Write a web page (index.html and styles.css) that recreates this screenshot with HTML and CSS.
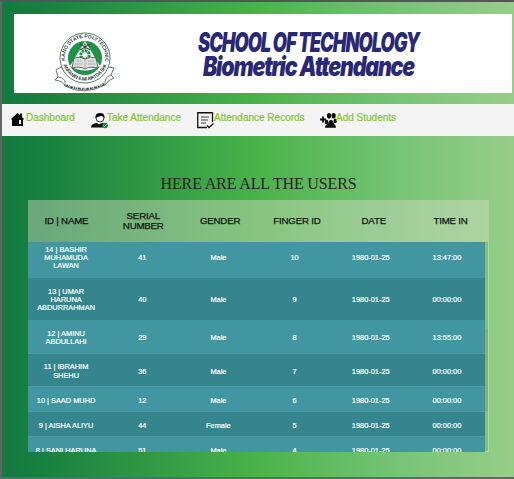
FILE: index.html
```html
<!DOCTYPE html>
<html lang="en">
<head>
<meta charset="utf-8">
<title>Biometric Attendance</title>
<link rel="stylesheet" href="styles.css">
</head>
<body>
<div class="page">
  <header class="banner">
    <svg class="crest" width="62" height="62" viewBox="0 0 62 62">
      <defs>
        <path id="arcTop" d="M12.200 34.500 A20.200 20.200 0 1 1 49.800 34.500"/>
        <path id="arcLow" d="M8.600 31 A22.800 22.800 0 0 0 53.400 31"/>
      </defs>
      <path d="M7 36 L2 39 L4 46 L1 49 Q9 50 11 55 Q30 65 51 54 Q54 49 60 47 L57 44 L60 37 L54 36 Q48 50 31 51 Q14 50 7 36Z" fill="#fff" stroke="#4e6c58" stroke-width=".9"/>
      <path d="M4 46 Q9 46 11 50 L11 55 M57 44 Q51 46 51 50 V54" fill="none" stroke="#4e6c58" stroke-width=".8"/>
      <circle cx="31" cy="27" r="25" fill="#fff" stroke="#4f8562" stroke-width="1"/>
      <circle cx="31" cy="27" r="17" fill="#1c9448"/>
      <path d="M31 10 L46 35 Q31 44 16 35Z" fill="#fff"/>
      <path d="M26 13 L36 19 M36 13 L26 19 M31 12 V19" stroke="#444" stroke-width="1.1"/>
      <circle cx="31" cy="24" r="4.2" fill="none" stroke="#1c9448" stroke-width="3" stroke-dasharray="2.4 .8"/>
      <path d="M20 27 Q26 25 31 28 Q37 25 42 27 L44 37 Q36 35 31 38 Q26 35 18 37Z" fill="#ddd" stroke="#444" stroke-width=".8"/>
      <path d="M31 28 V37 M22 30 H28 M34 30 H40 M21 33 H28 M34 33 H41" stroke="#999" stroke-width=".6"/>
      <text class="crest-text"><textPath href="#arcTop" startOffset="5" textLength="69">KANO STATE POLYTECHNIC</textPath></text>
      <text class="crest-text"><textPath href="#arcLow" startOffset="3" textLength="56">ANFANIN ILMI AIKI DA SHI</textPath></text>
      <path d="M12 54 Q31 62 50 53" fill="none" stroke="#444" stroke-width="2" stroke-dasharray="2 .7 1 .6 3 .8"/>
      <path d="M12 53.500 Q31 61 50 52.500" fill="none" stroke="#fff" stroke-width="1" stroke-dasharray="1 1.3"/>
    </svg>
    <svg class="title" width="236" height="64" viewBox="0 0 236 64">
      <text x="4" y="30" textLength="221" lengthAdjust="spacingAndGlyphs">SCHOOL OF TECHNOLOGY</text>
      <text x="9" y="54" textLength="211" lengthAdjust="spacingAndGlyphs">Biometric Attendance</text>
    </svg>
  </header>
  <nav class="menu">
    <a class="dash"><svg width="13" height="15" viewBox="0 0 13 15"><path d="M0 7 L6.5 1 L9 3 V1.5 H11 V5 L13 7 L12 8 V14 H1 V8Z" fill="#080808"/><path d="M8 8h2v4H8z" fill="#eee"/></svg><span>Dashboard</span></a>
    <a class="take"><svg width="17" height="17" viewBox="0 0 17 17"><path d="M0 15.500 Q0 11.500 6 11 L8 12.500 L11 11 Q13 11 14 12 V15.500Z" fill="#080808"/><circle cx="9" cy="6" r="4" fill="#fff" stroke="#333"/><path d="M4.500 6 Q4 1 9 1 Q14 1 13.500 6 Q12 4 10 4 Q6 5 4.500 6Z" fill="#080808"/><circle cx="14" cy="13.500" r="2.800" fill="#23883e"/><path d="M12.500 13.500 l1 1 2-2" stroke="#bde0c5" fill="none"/></svg><span>Take Attendance</span></a>
    <a class="records"><svg width="17" height="17" viewBox="0 0 17 17"><path d="M10 15.500 H.75 V.75 H15.500 V10" fill="none" stroke="#111" stroke-width="1.300"/><path d="M4 5h8M4 8h7M4 11h5" stroke="#444" stroke-width="1.200"/><path d="M10 13.500 l2 2 4.500-4" fill="none" stroke="#111" stroke-width="1.300"/></svg><span>Attendance Records</span></a>
    <a class="add"><svg width="17" height="17" viewBox="0 0 17 17"><path d="M0 7.500h6M3 4.500v6" stroke="#080808" stroke-width="1.800"/><g fill="#080808"><ellipse cx="9" cy="3.800" rx="2.100" ry="2.800"/><ellipse cx="13.600" cy="3.800" rx="2.100" ry="2.800"/><ellipse cx="6.500" cy="10" rx="1.800" ry="2.200"/><ellipse cx="15.200" cy="9" rx="1.700" ry="2.300"/><path d="M5 15.800 Q5 13 8 12 L9 9 Q11 7 13 9 L14 12 Q16 13 16 15.800Z"/></g></svg><span>Add Students</span></a>
  </nav>
  <main>
    <h1>HERE ARE ALL THE USERS</h1>
    <div class="row head">
      <div>ID | NAME</div><div>SERIAL<br>NUMBER</div><div>GENDER</div><div>FINGER ID</div><div>DATE</div><div>TIME IN</div>
    </div>
    <div class="scroller">
      <div class="rows">
        <div class="row tall first"><div>14 | BASHIR<br>MUHAMUDA<br>LAWAN</div><div>41</div><div>Male</div><div>10</div><div>1980-01-25</div><div>13:47:00</div></div>
        <div class="row tall"><div>13 | UMAR<br>HARUNA<br>ABDURRAHMAN</div><div>40</div><div>Male</div><div>9</div><div>1980-01-25</div><div>00:00:00</div></div>
        <div class="row mid"><div>12 | AMINU<br>ABDULLAHI</div><div>29</div><div>Male</div><div>8</div><div>1980-01-25</div><div>13:55:00</div></div>
        <div class="row mid"><div>11 | IBRAHIM<br>SHEHU</div><div>36</div><div>Male</div><div>7</div><div>1980-01-25</div><div>00:00:00</div></div>
        <div class="row"><div>10 | SAAD MUHD</div><div>12</div><div>Male</div><div>6</div><div>1980-01-25</div><div>00:00:00</div></div>
        <div class="row"><div>9 | AISHA ALIYU</div><div>44</div><div>Female</div><div>5</div><div>1980-01-25</div><div>00:00:00</div></div>
        <div class="row"><div>8 | SANI HARUNA</div><div>51</div><div>Male</div><div>4</div><div>1980-01-25</div><div>00:00:00</div></div>
      </div>
      <div class="track"><div class="thumb"></div></div>
    </div>
  </main>
</div>
</body>
</html>
```
FILE: styles.css
```css
* { box-sizing: border-box; }
body { margin: 0; font-family: "Liberation Sans", Arial, sans-serif; }
.page {
  height: 479px;
  overflow: hidden;
  border: 2px solid #666;
  border-top-color: #555;
  border-right: 0;
  background: linear-gradient(90deg, #137a3f 0, #167f40 35px, #4bb349 258px, #76c476 395px, #97cd88 510px);
}
.banner { display: flex; align-items: flex-start; height: 79px; margin: 12px 2px 11px 12px; padding: 17px 0 0 40px; background: #fff; }
.crest-text { font: bold 5px "Liberation Sans", sans-serif; fill: #444; }
.title { margin: -9px 0 0 78px; font: italic 900 26.500px Inter, Roboto, sans-serif; letter-spacing: -1.500px; fill: #292876; }
.menu { display: flex; height: 32px; padding: 8px 0 0 9px; background: #f4f4f4; color: #86c52c; font-size: 10px; line-height: 12px; -webkit-text-stroke: .2px #86c52c; }
.menu a { display: flex; }
.menu svg { flex: none; }
.menu span { white-space: nowrap; }
.dash { width: 80px; gap: 2px; }
.take { width: 106px; }
.take span, .add span { margin-left: -1px; }
.records { width: 123px; }
main { margin: 0 25px 0 26px; }
h1 { margin: 0; height: 64px; padding-top: 38px; text-align: center; font: 16px/20px "Liberation Serif", serif; letter-spacing: -.15px; color: #222; white-space: nowrap; }
.row { display: grid; grid-template-columns: repeat(6, 1fr); align-items: center; height: 25px; padding-top: 4px; text-align: center; background: #4196a1; color: #fff; border-bottom: 1px solid #4d9aa5; }
.row:nth-child(even) { background: #35858f; }
.row.head { height: 42px; padding-top: 0; background: rgba(210, 220, 195, .45); color: #111; border: 0; font-size: 9.700px; letter-spacing: -.2px; line-height: 10px; -webkit-text-stroke: .25px #111; }
.scroller { display: flex; height: 210px; overflow: hidden; }
.rows { flex: 1; font-size: 7.400px; line-height: 8.300px; -webkit-text-stroke: .2px #fff; }
.row.mid { height: 33.500px; }
.row.tall { height: 42px; padding-top: 2px; border: 0; }
.row.tall.first { height: 36px; padding: 0 0 4px; }
.track { width: 4px; border-right: 1px solid #b0dca4; border-bottom: 1px solid #b0dca4; background: #82bf7d; }
.thumb { height: 82px; margin-top: 87px; background: #7eb278; }
```
